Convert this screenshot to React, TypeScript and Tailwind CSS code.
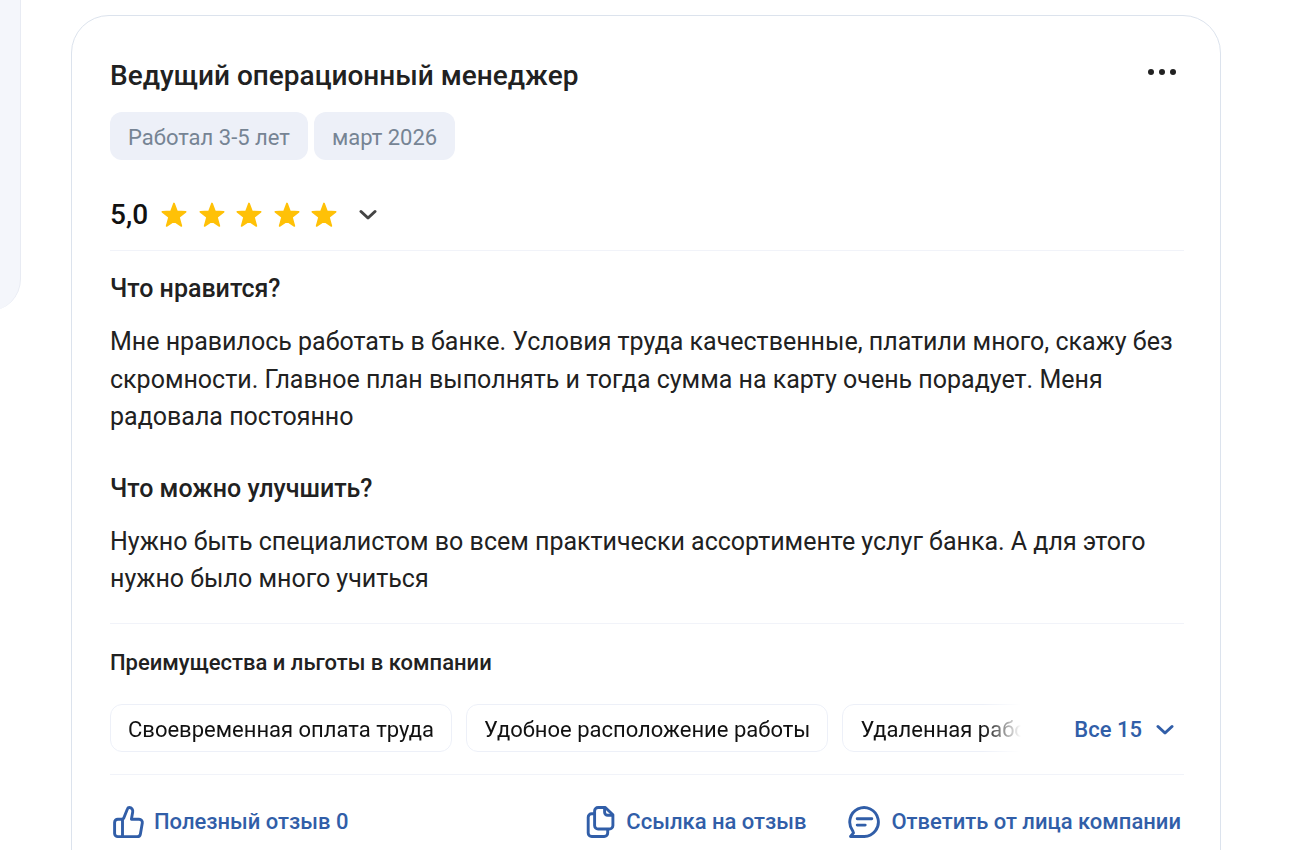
import { useState } from 'react';

const benefits = ['Своевременная оплата труда', 'Удобное расположение работы', 'Удаленная работа'];

function Star() {
  return (
    <svg viewBox="0 0 26 26" className="size-[26px]" fill="#ffc107" aria-hidden="true">
      <path
        d="M13 1.4 16 9.4 24.7 9.8 18 15.2 20.4 24 13 19.2 5.6 24 8 15.2 1.3 9.8 10 9.4Z"
        stroke="#ffc107"
        strokeWidth="1.6"
        strokeLinejoin="round"
      />
    </svg>
  );
}

function Chevron({ className }: { className: string }) {
  return (
    <svg viewBox="0 0 18 12" className={className} fill="none" stroke="currentColor" strokeWidth="3" strokeLinecap="round" strokeLinejoin="round" aria-hidden="true">
      <path d="m2 2.5 7 6.5 7-6.5" />
    </svg>
  );
}

function ThumbIcon() {
  return (
    <svg viewBox="0 0 34 34" className="size-[34px]" fill="none" stroke="currentColor" strokeWidth="2.9" strokeLinecap="round" strokeLinejoin="round" aria-hidden="true">
      <path d="M10.5 14.2H5.8a3.2 3.2 0 0 0-3.2 3.2v11a3.2 3.2 0 0 0 3.2 3.2h19.5a3.2 3.2 0 0 0 3.1-2.7l1.9-10.8a3.3 3.3 0 0 0-3.2-3.9H19.4l1.3-7.1C21.2 4.6 19.5 2.5 17.4 2.5a2 2 0 0 0-1.9 1.3L11.7 13.3Z" />
      <path d="M10.5 14.2V31.5" />
    </svg>
  );
}

function CopyIcon() {
  return (
    <svg viewBox="0 0 30 34" className="h-[34px] w-[30px]" fill="none" stroke="currentColor" strokeWidth="2.9" strokeLinecap="round" strokeLinejoin="round" aria-hidden="true">
      <path d="M12.1 2.5h7.2l7.6 7.3v10.7a3.5 3.5 0 0 1-3.5 3.5H12.1a3.5 3.5 0 0 1-3.5-3.5V6a3.5 3.5 0 0 1 3.5-3.5Z" />
      <path d="M18.6 3v4.200a3.100 3.100 0 0 0 3.100 3.100h4.700" />
      <path d="M8 8.800H5.700a3.500 3.500 0 0 0-3.500 3.500V28a3.500 3.500 0 0 0 3.500 3.500h12.500a3.500 3.500 0 0 0 3.500-3.500v-3.500" />
    </svg>
  );
}

function ReplyIcon() {
  return (
    <svg viewBox="0 0 34 34" className="size-[34px]" fill="none" stroke="currentColor" strokeWidth="2.9" strokeLinecap="round" strokeLinejoin="round" aria-hidden="true">
      <path d="M17.3 31.5H3.5l3-3.6-.8-2.1A14.3 14.5 0 1 1 17.3 31.5Z" />
      <path d="M10.2 13.800h14.600M10.200 20.100h8" />
    </svg>
  );
}

export default function App() {
  const [open, setOpen] = useState(false);
  return (
    <div className="flex h-screen items-start overflow-hidden bg-white pr-[95px] font-['Roboto',sans-serif] text-[#212121]">
      <aside className="flex w-[21px] shrink-0 justify-end overflow-hidden">
        <div className="h-[311px] w-24 shrink-0 rounded-br-[32px] border-r border-[#e8ebf3] bg-[#f4f6fb]" />
      </aside>
      <main className="ml-[50px] mt-[15px] min-w-0 flex-1">
        <article className="rounded-[38px] border border-[#dce3ed] pb-16 pl-[38px] pr-9 pt-[41px]">
          <header className="flex items-start justify-between">
            <h2 className="text-[28px] font-medium leading-[38px]">Ведущий операционный менеджер</h2>
            <button type="button" aria-label="Действия" className="flex h-[30px] items-center px-2">
              <svg viewBox="0 0 28 6" className="h-1.5 w-7" fill="#212121" aria-hidden="true">
                <circle cx="3" cy="3" r="3" />
                <circle cx="14" cy="3" r="3" />
                <circle cx="25" cy="3" r="3" />
              </svg>
            </button>
          </header>
          <div className="mt-[17px] flex gap-1.5 text-[22px] leading-[44px] text-[#768494]">
            <span className="rounded-xl bg-[#edf0f8] px-[18px] pt-1">Работал 3-5 лет</span>
            <span className="rounded-xl bg-[#edf0f8] px-[18px] pt-1">март 2026</span>
          </div>
          <div className="mt-9 flex h-[38px] items-center">
            <span className="text-[28px] font-medium text-[#111111]">5,0</span>
            <div className="ml-[13px] flex w-44 justify-between" role="img" aria-label="5 из 5">
              {[1, 2, 3, 4, 5].map((n) => <Star key={n} />)}
            </div>
            <button type="button" aria-label="Подробные оценки" className="ml-[22px] text-[#444444]">
              <Chevron className="h-3 w-[18px]" />
            </button>
          </div>
          <section className="mt-4 border-t border-[#f1f3f9] pt-[19px] text-[25px]">
            <h3 className="font-medium leading-[38px]">Что нравится?</h3>
            <p className="mt-[15px] leading-normal">
              Мне нравилось работать в банке. Условия труда качественные, платили много, скажу без скромности. Главное план выполнять и тогда сумма на карту очень порадует. Меня радовала постоянно
            </p>
            <h3 className="mt-[34px] font-medium leading-[38px]">Что можно улучшить?</h3>
            <p className="mt-[15px] leading-normal">
              Нужно быть специалистом во всем практически ассортименте услуг банка. А для этого нужно было много учиться
            </p>
          </section>
          <section className="mt-[25px] border-t border-[#f1f3f9] pt-[23px]">
            <h4 className="text-[22px] font-medium leading-8">Преимущества и льготы в компании</h4>
            <div className="mt-[25px] flex items-center">
              <div className={open ? 'flex min-w-0 flex-1 flex-wrap gap-3.5' : 'flex min-w-0 flex-1 gap-3.5 overflow-hidden [mask-image:linear-gradient(to_right,#000_calc(100%-38px),transparent)]'}>
                {benefits.map((b) => (
                  <span key={b} className="shrink-0 whitespace-nowrap rounded-xl border border-[#edf0f8] px-[17px] pt-1 text-[22px] leading-[42px] text-[#111111]">{b}</span>
                ))}
              </div>
              <button type="button" onClick={() => setOpen(!open)} className="ml-[53px] mr-2.5 flex shrink-0 items-center gap-3.5 pt-1 text-[22px] font-medium text-[#315ea8]">
                Все 15
                <Chevron className="h-3 w-[18px]" />
              </button>
            </div>
          </section>
          <footer className="mt-[22px] flex items-center border-t border-[#f1f3f9] pr-[3px] pt-[30px] text-[22px] font-medium leading-[34px] text-[#315ea8]">
            <button type="button" className="mr-auto flex items-center gap-2 pl-0.5"><ThumbIcon />Полезный отзыв 0</button>
            <button type="button" className="flex items-center gap-2.5"><CopyIcon />Ссылка на отзыв</button>
            <button type="button" className="ml-[41px] flex items-center gap-2.5"><ReplyIcon />Ответить от лица компании</button>
          </footer>
        </article>
      </main>
    </div>
  );
}
